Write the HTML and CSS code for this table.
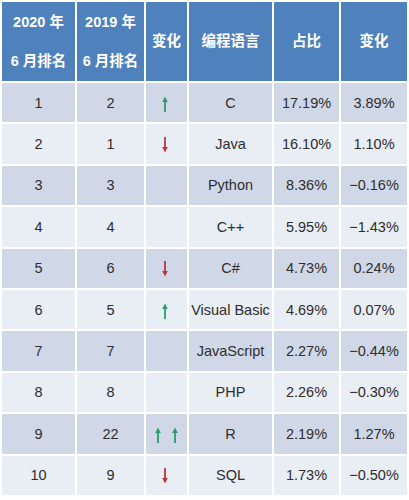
FILE: index.html
```html
<!DOCTYPE html>
<html lang="zh">
<head>
  <meta charset="UTF-8" />
  <title>编程语言排名</title>
  <link rel="stylesheet" href="styles.css">
</head>
<body>

<table class="rank-table">
  <colgroup>
    <col class="c-rank"><col class="c-prev"><col class="c-move"><col class="c-lang"><col class="c-share"><col class="c-delta">
  </colgroup>
  <thead>
    <tr>
      <th>2020 年<br>6 月排名</th>
      <th>2019 年<br>6 月排名</th>
      <th>变化</th>
      <th>编程语言</th>
      <th>占比</th>
      <th>变化</th>
    </tr>
  </thead>
  <tbody>
    <tr>
      <td>1</td><td>2</td>
      <td><svg class="arrow up" width="8" height="16" viewBox="0 0 8 16"><path class="stem" d="M4 16V4" /><path class="head" d="M1.2 6L4 0.5L6.8 6Z" /></svg></td>
      <td>C</td><td>17.19%</td><td>3.89%</td>
    </tr>
    <tr>
      <td>2</td><td>1</td>
      <td><svg class="arrow down" width="8" height="16" viewBox="0 0 8 16"><path class="stem" d="M4 0V12" /><path class="head" d="M1.2 10L4 15.5L6.8 10Z" /></svg></td>
      <td>Java</td><td>16.10%</td><td>1.10%</td>
    </tr>
    <tr>
      <td>3</td><td>3</td><td></td>
      <td>Python</td><td>8.36%</td><td>−0.16%</td>
    </tr>
    <tr>
      <td>4</td><td>4</td><td></td>
      <td>C++</td><td>5.95%</td><td>−1.43%</td>
    </tr>
    <tr>
      <td>5</td><td>6</td>
      <td><svg class="arrow down" width="8" height="16" viewBox="0 0 8 16"><path class="stem" d="M4 0V12" /><path class="head" d="M1.2 10L4 15.5L6.8 10Z" /></svg></td>
      <td>C#</td><td>4.73%</td><td>0.24%</td>
    </tr>
    <tr>
      <td>6</td><td>5</td>
      <td><svg class="arrow up" width="8" height="16" viewBox="0 0 8 16"><path class="stem" d="M4 16V4" /><path class="head" d="M1.2 6L4 0.5L6.8 6Z" /></svg></td>
      <td>Visual Basic</td><td>4.69%</td><td>0.07%</td>
    </tr>
    <tr>
      <td>7</td><td>7</td><td></td>
      <td>JavaScript</td><td>2.27%</td><td>−0.44%</td>
    </tr>
    <tr>
      <td>8</td><td>8</td><td></td>
      <td>PHP</td><td>2.26%</td><td>−0.30%</td>
    </tr>
    <tr>
      <td>9</td><td>22</td>
      <td class="double">
        <svg class="arrow up" width="8" height="16" viewBox="0 0 8 16"><path class="stem" d="M4 16V4" /><path class="head" d="M1.2 6L4 0.5L6.8 6Z" /></svg>
        <svg class="arrow up" width="8" height="16" viewBox="0 0 8 16"><path class="stem" d="M4 16V4" /><path class="head" d="M1.2 6L4 0.5L6.8 6Z" /></svg>
      </td>
      <td>R</td><td>2.19%</td><td>1.27%</td>
    </tr>
    <tr>
      <td>10</td><td>9</td>
      <td><svg class="arrow down" width="8" height="16" viewBox="0 0 8 16"><path class="stem" d="M4 0V12" /><path class="head" d="M1.2 10L4 15.5L6.8 10Z" /></svg></td>
      <td>SQL</td><td>1.73%</td><td>−0.50%</td>
    </tr>
  </tbody>
</table>

</body>
</html>
```

FILE: styles.css
```css
:root {
  --head: #4f81bd;
  --row-odd: #d0d8e8;
  --row-even: #e9edf4;
  --text: #2e2e2e;
  --up: #2a9d6c;
  --down: #bb3440;
}

body {
  margin: 0;
  background: #fff;
  font-family: "Liberation Sans", Arial, "Noto Sans CJK SC", sans-serif;
}

.rank-table {
  width: 409px;
  border-collapse: separate;
  border-spacing: 2px;
  table-layout: fixed;
  font-size: 14.5px;
  color: var(--text);
}

.c-rank { width: 73px; }
.c-prev { width: 67px; }
.c-move { width: 41px; }
.c-lang { width: 83px; }
.c-share { width: 65px; }
.c-delta { width: 66px; }

th, td {
  padding: 0;
  text-align: center;
  white-space: nowrap;
}

th {
  height: 79px;
  background: var(--head);
  color: #fff;
  font-weight: bold;
  font-size: 14.5px;
  line-height: 39px;
}

td {
  height: 39.4px;
  line-height: 20px;
}

tbody tr:nth-child(odd) td { background: var(--row-odd); }
tbody tr:nth-child(even) td { background: var(--row-even); }

.arrow {
  display: inline-block;
  vertical-align: middle;
  margin-right: 3px;
}

.arrow .stem {
  fill: none;
  stroke-width: 1.8;
}

.arrow.up .stem { stroke: var(--up); }
.arrow.up .head { fill: var(--up); }
.arrow.down .stem { stroke: var(--down); }
.arrow.down .head { fill: var(--down); }

.double .arrow {
  margin: 0 2px;
}
```
